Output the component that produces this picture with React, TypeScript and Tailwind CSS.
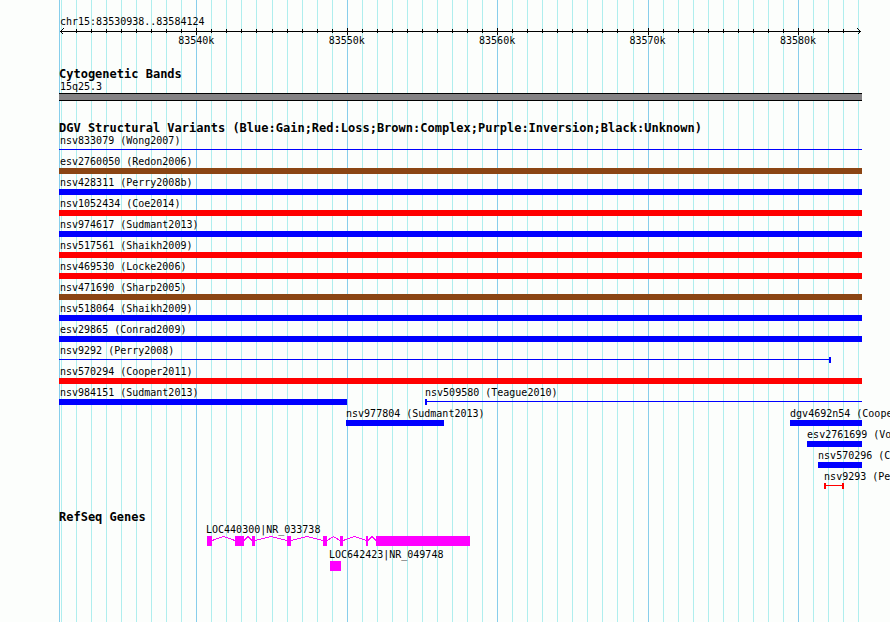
const REGION_START = 83530872;
const REGION_SPAN = 53385;

interface Feature {
  name: string;
  start?: number;
  end?: number;
  color: string;
  thin?: boolean;
}

interface Gene {
  name: string;
  exons: [number, number][];
}

const GAIN = "bg-[#0000ff]";
const LOSS = "bg-[#ff0000]";
const COMPLEX = "bg-[#8b4513]";

const variantRows: Feature[][] = [
  [{ name: "nsv833079 (Wong2007)", color: GAIN, thin: true }],
  [{ name: "esv2760050 (Redon2006)", color: COMPLEX }],
  [{ name: "nsv428311 (Perry2008b)", color: GAIN }],
  [{ name: "nsv1052434 (Coe2014)", color: LOSS }],
  [{ name: "nsv974617 (Sudmant2013)", color: GAIN }],
  [{ name: "nsv517561 (Shaikh2009)", color: LOSS }],
  [{ name: "nsv469530 (Locke2006)", color: LOSS }],
  [{ name: "nsv471690 (Sharp2005)", color: COMPLEX }],
  [{ name: "nsv518064 (Shaikh2009)", color: GAIN }],
  [{ name: "esv29865 (Conrad2009)", color: GAIN }],
  [{ name: "nsv9292 (Perry2008)", end: 83582202, color: GAIN, thin: true }],
  [{ name: "nsv570294 (Cooper2011)", color: LOSS }],
  [
    { name: "nsv984151 (Sudmant2013)", end: 83550020, color: GAIN },
    { name: "nsv509580 (Teague2010)", start: 83555207, color: GAIN, thin: true },
  ],
  [
    { name: "nsv977804 (Sudmant2013)", start: 83549955, end: 83556471, color: GAIN },
    { name: "dgv4692n54 (Cooper2011)", start: 83579476, color: GAIN },
  ],
  [{ name: "esv2761699 (Vogler2010)", start: 83580607, color: GAIN }],
  [{ name: "nsv570296 (Cooper2011)", start: 83581338, color: GAIN }],
  [{ name: "nsv9293 (Perry2008)", start: 83581737, end: 83583067, color: LOSS, thin: true }],
];

const genes: Gene[] = [
  {
    name: "LOC440300|NR_033738",
    exons: [
      [83540713, 83541045],
      [83542574, 83543173],
      [83543705, 83543904],
      [83546032, 83546298],
      [83548426, 83548692],
      [83549556, 83549756],
      [83551285, 83551418],
      [83551949, 83558200],
    ],
  },
  { name: "LOC642423|NR_049748", exons: [[83548891, 83549623]] },
];

const ticks = Array.from({ length: 54 }, (_, i) => 83531000 + i * 1000);

function percent(bp: number) {
  return ((bp - REGION_START) / REGION_SPAN) * 100;
}

function Gridlines() {
  return (
    <div className="absolute inset-0" aria-hidden="true">
      <div className="absolute inset-y-0 left-0 w-px bg-[#87ceeb]" />
      {ticks.map((bp) => (
        <div
          key={bp}
          className={`absolute inset-y-0 w-px ${bp % 10000 === 0 ? "bg-[#87ceeb]" : "bg-[#afeeee]"}`}
          style={{ left: `${percent(bp)}%` }}
        />
      ))}
    </div>
  );
}

function Ruler() {
  return (
    <div>
      <div className="relative h-[7px]">
        <div className="absolute inset-x-px top-[3px] h-px bg-black" />
        <svg className="absolute top-0 left-px" width="4" height="7" shapeRendering="crispEdges" fill="none" stroke="black">
          <path d="M3.5 0.5L0.5 3.5L3.5 6.5" />
        </svg>
        <svg className="absolute top-0 right-px" width="4" height="7" shapeRendering="crispEdges" fill="none" stroke="black">
          <path d="M0.5 0.5L3.5 3.5L0.5 6.5" />
        </svg>
        {ticks.slice(1, -1).map((bp) => (
          <div
            key={bp}
            className={`absolute w-px bg-black ${bp % 10000 === 0 ? "inset-y-0" : "top-px h-1"}`}
            style={{ left: `${percent(bp)}%` }}
          />
        ))}
      </div>
      <div className="relative h-3">
        {ticks
          .filter((bp) => bp % 10000 === 0)
          .map((bp) => (
            <span
              key={bp}
              className="absolute top-0 -translate-x-1/2 leading-3"
              style={{ left: `${percent(bp)}%` }}
            >
              {bp / 1000}k
            </span>
          ))}
      </div>
    </div>
  );
}

function Variant({ name, start, end, color, thin }: Feature) {
  const left = start ? percent(start) : 0;
  const right = end ? percent(end) : 100;

  return (
    <div className="col-start-1 row-start-1 min-w-0" style={{ marginLeft: `${left}%` }}>
      <div className={`h-[15px] leading-[17px] ${start ? "" : "ml-px"}`}>{name}</div>
      <div
        className={`h-[6px] flex items-stretch ${thin ? "" : color}`}
        style={{ width: `${((right - left) / (100 - left)) * 100}%` }}
      >
        {thin && (
          <>
            {start && <div className={`w-[2px] ${color}`} />}
            <div className={`mt-[2px] h-px grow ${color}`} />
            {end && <div className={`w-[2px] ${color}`} />}
          </>
        )}
      </div>
    </div>
  );
}

function GeneModel({ name, exons }: Gene) {
  const x = (bp: number) => (percent(bp) / 100) * 803;

  return (
    <div>
      <div className="h-[15px] leading-[17px] -ml-px" style={{ paddingLeft: `${percent(exons[0][0])}%` }}>
        {name}
      </div>
      <svg
        className="block w-full h-[10px]"
        viewBox="0 0 803 10"
        preserveAspectRatio="none"
        shapeRendering="crispEdges"
      >
        {exons.map(([start, end], i) => {
          const next = exons[i + 1];
          return (
            <g key={start}>
              <rect x={x(start)} y="0" width={x(end) - x(start)} height="10" fill="#ff00ff" />
              {next && (
                <path
                  d={`M${x(end)} 4.5L${(x(end) + x(next[0])) / 2} 0.5L${x(next[0])} 4.5`}
                  fill="none"
                  stroke="#ff00ff"
                />
              )}
            </g>
          );
        })}
      </svg>
    </div>
  );
}

function App() {
  return (
    <main className="min-h-screen overflow-hidden bg-[#fcfefc] pl-[59px] pr-7 font-['DejaVu_Sans_Mono',monospace] text-[10px] text-black whitespace-nowrap flex">
      <div className="relative grow min-w-0">
        <Gridlines />
        <div className="relative pt-[13px]">
          <h1 className="ml-px h-[15px] leading-[17px]">chr15:83530938..83584124</h1>
          <Ruler />

          <section className="pt-5">
            <h2 className="h-[14px] leading-[14px] text-xs font-bold">Cytogenetic Bands</h2>
            <div className="ml-px h-3 leading-3">15q25.3</div>
            <div className="h-2 border-y border-black bg-[#848284]" />
          </section>

          <section className="pt-5">
            <h2 className="h-[11px] leading-[14px] text-xs font-bold">
              DGV Structural Variants (Blue:Gain;Red:Loss;Brown:Complex;Purple:Inversion;Black:Unknown)
            </h2>
            {variantRows.map((row) => (
              <div key={row[0].name} className="grid grid-cols-1">
                {row.map((variant) => (
                  <Variant key={variant.name} {...variant} />
                ))}
              </div>
            ))}
          </section>

          <section className="pt-[21px]">
            <h2 className="h-[11px] leading-[14px] text-xs font-bold">RefSeq Genes</h2>
            {genes.map((gene) => (
              <GeneModel key={gene.name} {...gene} />
            ))}
          </section>
        </div>
      </div>
    </main>
  );
}

export default App;
